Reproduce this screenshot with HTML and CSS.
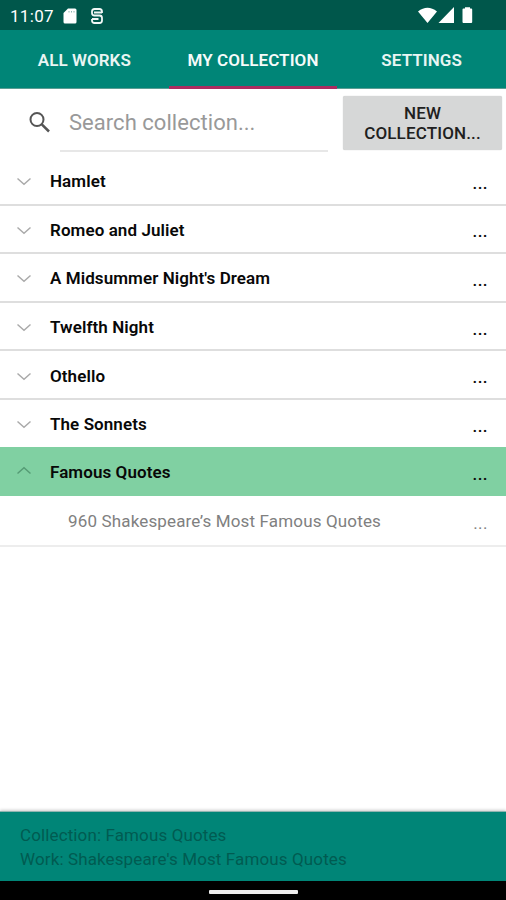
FILE: index.html
```html
<!DOCTYPE html>
<html lang="en">
<head>
<meta charset="utf-8">
<title>My Collection</title>
<link rel="stylesheet" href="styles.css">
</head>
<body>
<svg class="defs" width="0" height="0">
  <symbol id="chevron" viewBox="0 0 16 9"><path d="M1.500 1.500 8 7.200l6.500-5.700" fill="none" stroke="currentColor" stroke-width="1.500"/></symbol>
</svg>
<div class="screen">
  <header class="status">
    <span class="clock">11:07</span>
    <svg class="sd" width="14" height="16" viewBox="0 0 14 16"><path d="M5 .5h7q1.500 0 1.500 1.500v12q0 1.500-1.500 1.500H2Q.5 15.500.5 14V5z" fill="#fff"/><path d="M6 3v1.500M8.500 3v1.500M11 3v1.500" stroke="#8fb5af" stroke-width="1"/></svg>
    <svg class="sync" width="12" height="16" viewBox="0 0 12 16"><path d="M11 5V3.500Q11 1 8.500 1h-5Q1 1 1 3.500v1.500Q1 7.500 3.500 7.500H8.500Q11 7.500 11 10v2.500Q11 15 8.500 15h-5Q1 15 1 12.500V11M3 4.500h8M1 11h6.500" fill="none" stroke="#f1f7f6" stroke-width="1.800"/></svg>
    <svg class="signals" width="56" height="17" viewBox="0 0 56 17" fill="#fff"><path d="M0 4.500Q9.500-3 19 4.500L9.500 16zM20.500 16 36 0v16zM47 1.500V.3h5v1.200h1.200q1 0 1 1V15q0 1-1 1h-7.700q-1 0-1-1V2.500q0-1 1-1z"/></svg>
  </header>
  <nav class="tabs">
    <a class="tab">ALL WORKS</a>
    <a class="tab active">MY COLLECTION</a>
    <a class="tab">SETTINGS</a>
  </nav>
  <section class="tools">
    <svg class="search-icon" width="24" height="24" viewBox="0 0 24 24"><g fill="none" stroke="#555" stroke-width="2"><circle cx="9" cy="8.500" r="6.500"/><path d="m13.800 13.300 7.200 7.200" stroke-width="2.500"/></g></svg>
    <div class="search">Search collection...</div>
    <button class="new">NEW<br>COLLECTION...</button>
  </section>
  <main class="list">
    <div class="row"><svg class="chev"><use href="#chevron"/></svg><span class="name">Hamlet</span><span class="more">...</span></div>
    <div class="row"><svg class="chev"><use href="#chevron"/></svg><span class="name">Romeo and Juliet</span><span class="more">...</span></div>
    <div class="row"><svg class="chev"><use href="#chevron"/></svg><span class="name">A Midsummer Night's Dream</span><span class="more">...</span></div>
    <div class="row"><svg class="chev"><use href="#chevron"/></svg><span class="name">Twelfth Night</span><span class="more">...</span></div>
    <div class="row"><svg class="chev"><use href="#chevron"/></svg><span class="name">Othello</span><span class="more">...</span></div>
    <div class="row"><svg class="chev"><use href="#chevron"/></svg><span class="name">The Sonnets</span><span class="more">...</span></div>
    <div class="row open"><svg class="chev"><use href="#chevron"/></svg><span class="name">Famous Quotes</span><span class="more">...</span></div>
    <div class="row child"><span class="name">960 Shakespeare’s Most Famous Quotes</span><span class="more">...</span></div>
  </main>
  <footer class="info">
    <div>Collection: Famous Quotes</div>
    <div>Work: Shakespeare's Most Famous Quotes</div>
  </footer>
  <div class="navbar"><div class="pill"></div></div>
</div>
</body>
</html>
```
FILE: styles.css
```css
* { box-sizing: border-box; }
body { margin: 0; font-family: Roboto, "Liberation Sans", sans-serif; background: #fff; }
.defs { position: absolute; }
.screen { width: 506px; height: 900px; display: flex; flex-direction: column; overflow: hidden; }
.status { height: 30px; flex: none; display: flex; align-items: center; padding: 1px 32px 0 10px; background: #00574b; color: #fff; }
.clock { width: 53px; font-size: 17px; letter-spacing: .3px; }
.sync { margin-left: 14px; }
.signals { margin-left: auto; }
.tabs { height: 59px; flex: none; display: grid; grid-template-columns: repeat(3, 1fr); background: #008577; border-bottom: 1px solid #5b9d94; }
.tab { display: flex; align-items: center; justify-content: center; padding-top: 3px; color: #e9f5f3; font-size: 17px; font-weight: 600; letter-spacing: .07px; border-bottom: 2px solid transparent; }
.tab.active { border-bottom: 3px solid #ab2b60; margin-bottom: -1px; color: #f6fbfa; }
.tools { height: 68px; flex: none; display: flex; align-items: flex-start; padding: 7px 4px 0 28px; }
.search-icon { margin-top: 15px; }
.search { width: 268px; height: 56px; margin-left: 8px; padding: 0 9px; border-bottom: 2px solid #e7e7e7; font-size: 22px; line-height: 54px; color: #999; letter-spacing: .04px; white-space: nowrap; }
.new { width: 159px; height: 54px; margin-left: auto; padding: 0; border: 0; border-radius: 2px; background: #d6d7d7; box-shadow: 0 0 1px #bbb; color: #202020; font: 500 17px/20px Roboto, sans-serif; letter-spacing: .15px; }
.list { flex: 1; }
.row { height: 48.6px; display: flex; align-items: center; padding: 2px 18px 0 16px; border-bottom: 2px solid #dedede; color: #080808; font-size: 17px; }
.chev { width: 16px; height: 9px; color: #aaa; margin-top: 1px; }
.name { margin-left: 18px; font-weight: 600; letter-spacing: .08px; white-space: nowrap; }
.more { margin: 3px 0 0 auto; font-weight: 500; letter-spacing: .45px; }
.open { height: 49.4px; margin-top: -1.6px; padding-top: 3px; background: #80d0a2; border-color: #80d0a2; }
.open .chev { transform: rotate(180deg); color: #559b75; margin-top: -4px; }
.child { height: 51px; padding-top: 1px; border-color: #ededed; color: #808080; }
.child .name { margin-left: 52px; font-weight: 400; letter-spacing: .15px; }
.child .more { font-weight: 400; }
.info { height: 70px; flex: none; padding: 12px 20px; background: #008577; border-top: 1px solid #90b5b1; box-shadow: 0 -1px 3px #ccc; color: #005b51; font-size: 17px; line-height: 23.500px; letter-spacing: .12px; }
.navbar { height: 19px; flex: none; display: flex; justify-content: center; padding-top: 9px; background: #000; }
.pill { width: 89px; height: 4px; background: #eee; border-radius: 1px; }
```
